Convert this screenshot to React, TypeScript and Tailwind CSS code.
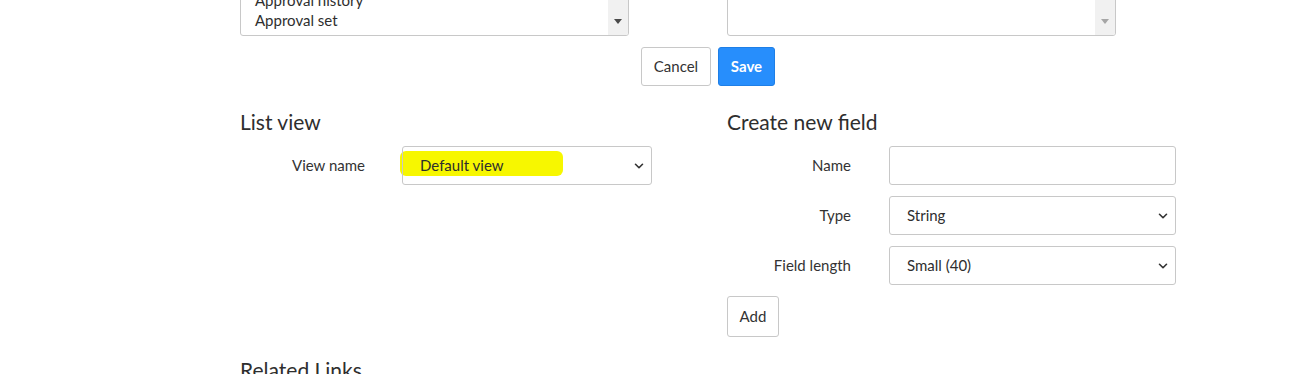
import { ChevronDown } from 'lucide-react';

const font = { fontFamily: 'Lato, "Source Sans Pro", "Noto Sans", sans-serif' };

function SlushBox({ items, active }: { items: string[]; active: boolean }) {
  return (
    <div className="relative -mt-[44px] h-[80px] w-[389px] overflow-hidden rounded-[3px] border border-[#c8c8c8] bg-white">
      <div className="flex h-full flex-col justify-end pb-[5px] pl-[14px] text-[15px] leading-[20px] text-[#2e2e2e]">
        {items.map((item) => (
          <div key={item}>{item}</div>
        ))}
      </div>
      <div className="absolute right-0 top-0 flex h-full w-[20px] items-end justify-center bg-[#f1f1f1] pb-[11px]">
        <div
          className={`h-0 w-0 border-x-[4px] border-t-[5px] border-x-transparent ${
            active ? 'border-t-[#4a4a4a]' : 'border-t-[#a6a6a6]'
          }`}
        />
      </div>
    </div>
  );
}

function Row({ label, gap, children }: { label: string; gap: string; children: React.ReactNode }) {
  return (
    <div className="flex h-[39px] items-center">
      <div className="w-[125px] text-right text-[15px] text-[#333]">{label}</div>
      <div className={gap}>{children}</div>
    </div>
  );
}

function FakeSelect({ value }: { value: string }) {
  return (
    <div className="flex h-[39px] w-[287px] items-center justify-between rounded-[3px] border border-[#c8c8c8] bg-white pl-[17px] pr-[5px] text-[15px] text-[#2e2e2e]">
      <span>{value}</span>
      <ChevronDown size={14} strokeWidth={2.75} className="text-[#333]" />
    </div>
  );
}

export default function App() {
  return (
    <div className="h-[374px] w-[1316px] overflow-hidden bg-white" style={font}>
      <div className="ml-[240px] w-[936px]">
        <div className="flex gap-[98px]">
          <SlushBox items={['Approval group', 'Approval history', 'Approval set']} active />
          <SlushBox items={[]} active={false} />
        </div>

        <div className="mt-[11px] flex justify-center gap-[7px]">
          <button className="h-[39px] w-[70px] rounded-[3px] border border-[#c8c8c8] bg-white text-[15px] text-[#333]">
            Cancel
          </button>
          <button className="h-[39px] w-[57px] rounded-[3px] border border-[#1f7fe6] bg-[#278efc] text-[15px] font-bold text-white">
            Save
          </button>
        </div>

        <div className="mt-[21px] flex">
          <div className="w-[487px]">
            <h2 className="h-[30px] text-[21px] leading-[30px] text-[#2e2e2e]">List view</h2>
            <div className="mt-[9px]">
              <Row label="View name" gap="ml-[37px]">
                <div className="relative w-[250px]">
                  <div className="pointer-events-none absolute left-[-2px] top-[5px] h-[25px] w-[163px] rounded-[6px] bg-[#f7f700] blur-[0.6px]" />
                  <div className="relative">
                    <div className="flex h-[39px] items-center justify-between rounded-[3px] border border-[#c8c8c8] pl-[17px] pr-[5px] text-[15px] text-[#2e2e2e]">
                      <span>Default view</span>
                      <ChevronDown size={14} strokeWidth={2.75} className="text-[#333]" />
                    </div>
                  </div>
                </div>
              </Row>
            </div>
          </div>

          <div className="w-[449px]">
            <h2 className="h-[30px] text-[21px] leading-[30px] text-[#2e2e2e]">Create new field</h2>
            <div className="mt-[9px] flex flex-col gap-[11px]">
              <Row label="Name" gap="ml-[38px]">
                <div className="h-[39px] w-[287px] rounded-[3px] border border-[#c8c8c8] bg-white" />
              </Row>
              <Row label="Type" gap="ml-[38px]">
                <FakeSelect value="String" />
              </Row>
              <Row label="Field length" gap="ml-[38px]">
                <FakeSelect value="Small (40)" />
              </Row>
              <div>
                <button className="h-[41px] w-[52px] rounded-[3px] border border-[#c8c8c8] bg-white text-[15px] text-[#333]">
                  Add
                </button>
              </div>
            </div>
          </div>
        </div>

        <h2 className="mt-[18px] h-[30px] text-[21px] leading-[30px] text-[#2e2e2e]">Related Links</h2>
      </div>
    </div>
  );
}
